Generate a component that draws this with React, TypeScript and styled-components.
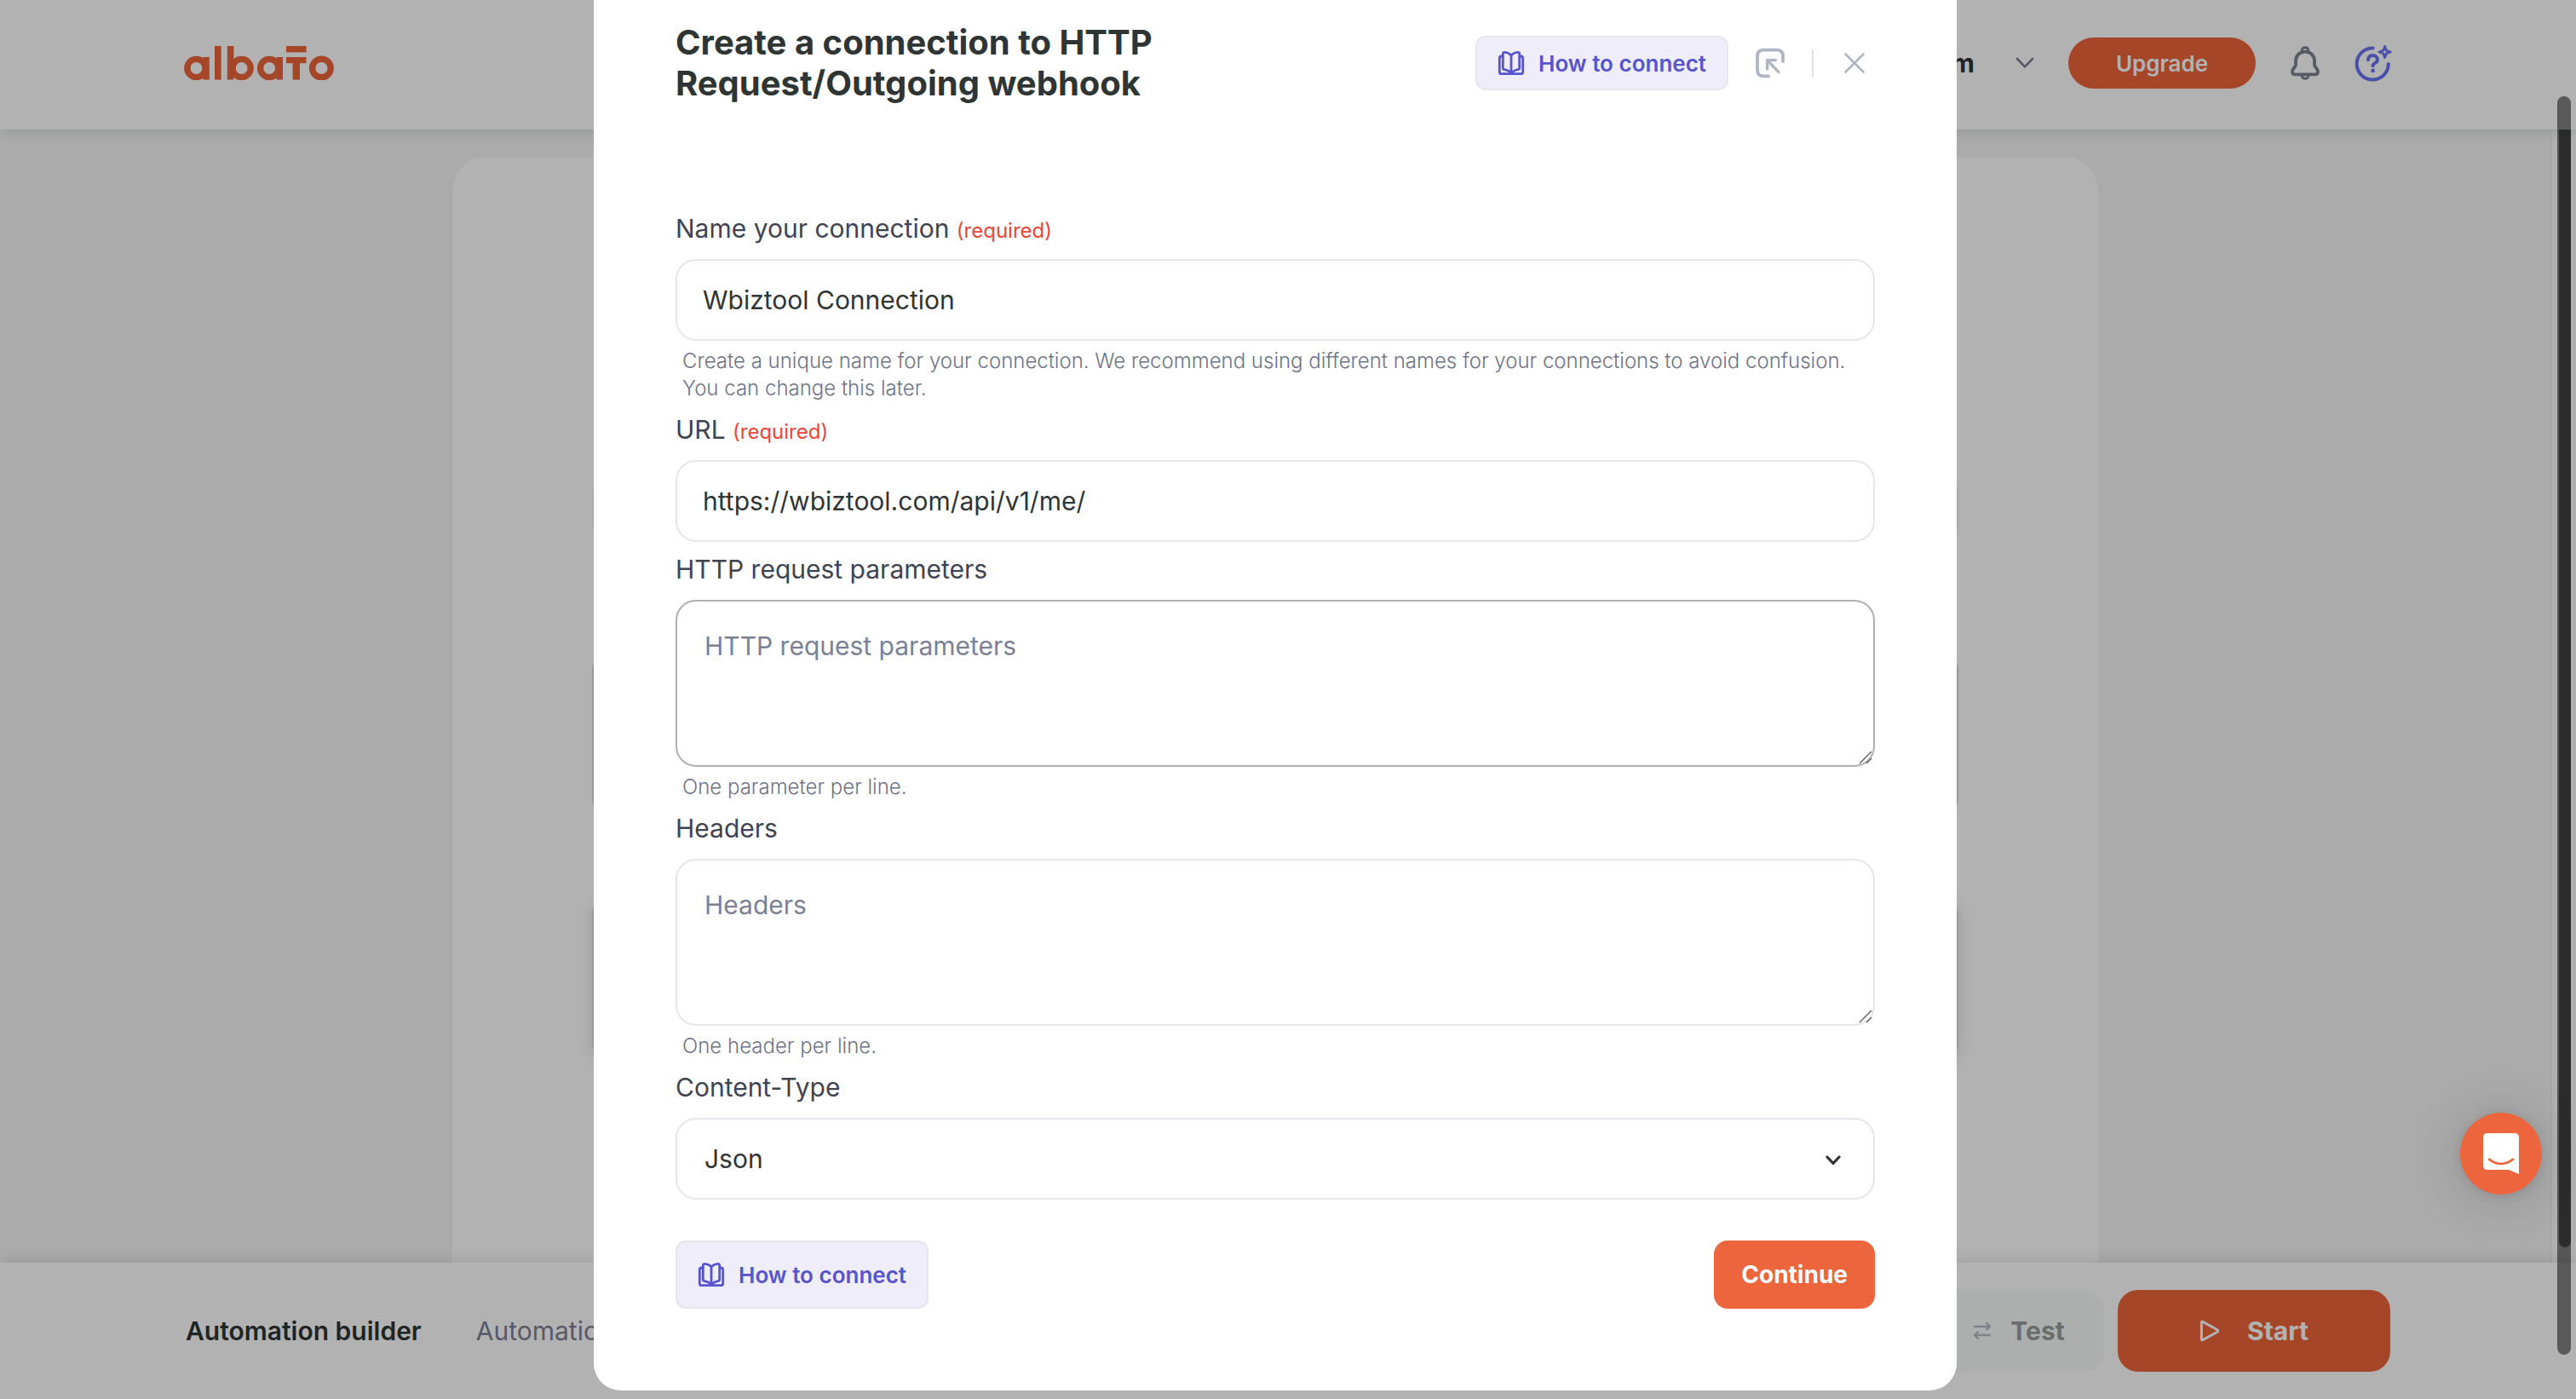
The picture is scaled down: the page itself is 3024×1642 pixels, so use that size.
import React from "react";
import styled, { createGlobalStyle, css } from "styled-components";

const color = {
  ink: "#2f3534",
  label: "#3f4352",
  muted: "#7b8094",
  hint: "#6e7388",
  line: "#e6e6eb",
  accent: "#ed653c",
  violet: "#5853cf",
  violetSoft: "#eeedf9",
  icon: "#b1b5c3",
  danger: "#f04438",
};

const GlobalStyle = createGlobalStyle`
  *, *::before, *::after { box-sizing: border-box; }
  html, body { margin: 0; height: 100%; overflow: hidden; }
  body {
    font-family: Inter, "Liberation Sans", sans-serif;
    color: ${color.ink};
    background: #f5f5f5;
  }
  #root { height: 100%; }
  button, input, textarea, select { font: inherit; color: inherit; margin: 0; }
  button { border: 0; background: none; padding: 0; cursor: pointer; }
  h2, p { margin: 0; }
  svg { display: block; flex: none; }
`;

const Page = styled.div`
  position: relative;
  display: flex;
  flex-direction: column;
  height: 100vh;
  overflow: hidden;
`;

const TopBar = styled.header`
  position: relative;
  z-index: 1;
  flex: none;
  height: 152px;
  padding-bottom: 4px;
  background: #fff;
  box-shadow: 0 2px 16px rgba(60, 80, 90, 0.16);
`;

const BottomBar = styled.footer`
  position: relative;
  z-index: 1;
  flex: none;
  height: 160px;
  background: #fff;
  box-shadow: 0 -2px 16px rgba(60, 80, 70, 0.16);
`;

const Container = styled.div<{ $max: number }>`
  display: flex;
  align-items: center;
  justify-content: space-between;
  width: calc(100% - 400px);
  max-width: ${(p) => p.$max}px;
  height: 100%;
  margin: 0 auto;
`;

const HomeLink = styled.a`
  display: block;
  color: ${color.accent};
`;

const TopActions = styled.div`
  display: flex;
  align-items: center;
  gap: 40px;
`;

const Workspace = styled.button`
  display: flex;
  align-items: center;
  gap: 48px;
  font-size: 30px;
  font-weight: 700;
`;

const Upgrade = styled.button`
  width: 220px;
  height: 60px;
  border-radius: 30px;
  background: ${color.accent};
  color: #fff;
  font-size: 26px;
  font-weight: 600;
`;

const IconButton = styled.button`
  display: grid;
  place-items: center;
`;

const Workarea = styled.main`
  display: flex;
  flex: 1;
  min-height: 0;
`;

const Canvas = styled.div`
  flex: 1;
  padding: 32px 531px 0;
`;

const Sheet = styled.section`
  display: flex;
  flex-direction: column;
  height: 100%;
  padding: 378px 164px 0;
  border-radius: 40px 40px 0 0;
  background: #fff;
`;

const Notice = styled.div`
  height: 70px;
  margin-bottom: 138px;
  border-radius: 16px;
  background: #f4f4f5;
`;

const StepCard = styled.div<{ $raised?: boolean }>`
  height: 184px;
  margin-bottom: 103px;
  border: 2px solid #dadada;
  border-radius: 16px;
  background: #fff;
  box-shadow: ${(p) => (p.$raised ? "0 4px 20px rgba(0, 0, 0, 0.12)" : "none")};
`;

const PageTrack = styled.div`
  flex: none;
  width: 30px;
  padding: 0 6px 18px 8px;
  border-left: 2px solid #f0f0f0;
  background: #fcfcfc;
`;

const PageThumb = styled.div`
  height: 100%;
  border-radius: 0 0 8px 8px;
  background: #7f7f7f;
`;

const Tabs = styled.nav`
  display: flex;
  gap: 64px;
`;

const Tab = styled.a<{ $active?: boolean }>`
  color: ${(p) => (p.$active ? color.ink : color.muted)};
  font-size: 30px;
  font-weight: ${(p) => (p.$active ? 600 : 400)};
  text-decoration: none;
`;

const RunActions = styled.div`
  display: flex;
  gap: 16px;
`;

const RunButton = styled.button<{ $primary?: boolean }>`
  display: flex;
  align-items: center;
  justify-content: center;
  width: ${(p) => (p.$primary ? 320 : 200)}px;
  height: 96px;
  gap: ${(p) => (p.$primary ? 32 : 22)}px;
  border-radius: 24px;
  background: ${(p) => (p.$primary ? color.accent : "#f7fbf9")};
  color: ${(p) => (p.$primary ? "#fff" : "#999d9b")};
  font-size: 30px;
  font-weight: 700;
`;

const Overlay = styled.div`
  position: absolute;
  inset: 0;
  z-index: 2;
  display: flex;
  align-items: flex-end;
  justify-content: center;
  padding: 0 30px 10px 0;
  background: rgba(0, 0, 0, 0.3);
`;

const OverlayThumb = styled.div`
  position: absolute;
  top: 113px;
  right: 6px;
  bottom: 52px;
  width: 16px;
  border-radius: 8px;
  background: rgba(0, 0, 0, 0.5);
`;

const Modal = styled.div`
  flex: none;
  width: 1600px;
  max-width: 100%;
  padding: 96px;
  border-radius: 32px;
  background: #fff;
`;

const ModalHeader = styled.header`
  display: flex;
  align-items: center;
  justify-content: space-between;
  margin-bottom: 126px;
`;

const Title = styled.h2`
  width: 640px;
  font-size: 40px;
  font-weight: 700;
  line-height: 48px;
`;

const HeaderActions = styled.div`
  display: flex;
  align-items: center;
  gap: 32px;
  padding-right: 12px;
`;

const Divider = styled.span`
  width: 2px;
  height: 32px;
  background: #dcdfe6;
`;

const CloseButton = styled(IconButton)`
  margin-left: 4px;
`;

const HelpButton = styled.button<{ $large?: boolean }>`
  display: flex;
  align-items: center;
  height: ${(p) => (p.$large ? 80 : 64)}px;
  gap: 16px;
  padding: 0 24px;
  border: 2px solid ${color.line};
  border-radius: 12px;
  background: ${color.violetSoft};
  color: ${color.violet};
  font-size: 26px;
  font-weight: 600;
`;

const Form = styled.form`
  display: flex;
  flex-direction: column;
  gap: 12px;
`;

const Field = styled.div`
  display: flex;
  flex-direction: column;
`;

const Label = styled.label`
  margin-bottom: 16px;
  color: ${color.label};
  font-size: 30px;
  line-height: 40px;
`;

const Required = styled.span`
  color: ${color.danger};
  font-size: 24px;
  line-height: 24px;
`;

const control = css`
  display: block;
  width: 100%;
  border: 2px solid ${color.line};
  border-radius: 24px;
  outline: 0;
  background: #fff;
  font-size: 30px;
  line-height: 40px;
`;

const TextInput = styled.input`
  ${control}
  height: 96px;
  padding: 0 30px;
`;

const TextArea = styled.textarea<{ $hover?: boolean }>`
  ${control}
  height: 196px;
  padding: 32px;
  border-color: ${(p) => (p.$hover ? "#b0b0b0" : color.line)};
  resize: none;
  &::placeholder { color: ${color.muted}; opacity: 1; }
`;

const Select = styled.select`
  ${control}
  height: 96px;
  padding: 0 32px;
  appearance: none;
`;

const ControlWrap = styled.div`
  position: relative;
`;

const Grip = styled.svg`
  position: absolute;
  right: 2px;
  bottom: 2px;
`;

const Caret = styled.svg`
  position: absolute;
  top: 44px;
  right: 40px;
  pointer-events: none;
`;

const Hint = styled.p`
  margin-top: 8px;
  padding: 0 8px;
  color: ${color.hint};
  font-size: 24px;
  font-weight: 300;
  line-height: 32px;
`;

const FormFooter = styled.div`
  display: flex;
  justify-content: space-between;
  margin-top: 36px;
`;

const Submit = styled.button`
  height: 80px;
  padding: 0 32px;
  border-radius: 16px;
  background: ${color.accent};
  color: #fff;
  font-size: 28px;
  font-weight: 700;
`;

const ChatLauncher = styled.button`
  position: absolute;
  right: 40px;
  bottom: 240px;
  z-index: 3;
  display: grid;
  place-items: center;
  width: 96px;
  height: 96px;
  border-radius: 50%;
  background: ${color.accent};
  box-shadow: 0 2px 12px rgba(0, 0, 0, 0.1), 0 4px 64px rgba(0, 0, 0, 0.16);
`;

const Logo = () => (
  <svg width="176" height="40" viewBox="0 0 176 40" fill="currentColor" aria-hidden="true">
    <g fill="none" stroke="currentColor" strokeWidth="7.4">
      <circle cx="14.4" cy="26" r="10.6" />
      <circle cx="67.6" cy="26" r="10.6" />
      <circle cx="100.2" cy="26" r="10.6" />
      <circle cx="161.4" cy="26" r="10.8" />
    </g>
    <rect x="22.4" y="13" width="7.4" height="26.6" />
    <rect x="36" y="0" width="7.6" height="39.6" />
    <rect x="50.8" y="0" width="7.6" height="39.6" />
    <rect x="108.6" y="13" width="7.4" height="26.6" />
    <rect x="120" y="0" width="23.6" height="7.4" />
    <rect x="120" y="13" width="23.6" height="7.2" />
    <rect x="127.6" y="13" width="8.4" height="26.6" />
  </svg>
);

const BookIcon = () => (
  <svg width="32" height="32" viewBox="0 0 32 32" fill="none" stroke="currentColor" strokeWidth="2.8" strokeLinecap="round" strokeLinejoin="round" aria-hidden="true">
    <path d="M6 8H4.6Q2.3 8 2.3 10.2V26.4Q2.3 28.7 4.6 28.7H27.4Q29.7 28.7 29.7 26.4V10.2Q29.7 8 27.4 8H26" />
    <path d="M16 6.6C13.6 4.6 11 3.6 8.4 3.4Q6.3 3.3 6.3 5.4V21.4Q6.3 23.4 8.3 23.7C11.2 24.2 13.6 25.2 16 27.4" />
    <path d="M16 6.6C18.4 4.6 21 3.6 23.6 3.4Q25.7 3.3 25.7 5.4V21.4Q25.7 23.4 23.7 23.7C20.8 24.2 18.4 25.2 16 27.4" />
    <path d="M16 6.6V27.4" />
  </svg>
);

const CollapseIcon = () => (
  <svg width="34" height="36" viewBox="0 0 34 36" fill="none" stroke={color.icon} strokeWidth="3.8" strokeLinecap="round" strokeLinejoin="round" aria-hidden="true">
    <path d="M15 33.4H9.5Q2 33.4 2 26V9.5Q2 2.6 9.5 2.6H24.5Q32 2.6 32 9.5V16" />
    <path d="M27 28.6L13.6 14.6M13.6 25V14.6H23.4" strokeWidth="3.4" />
  </svg>
);

const CloseIcon = () => (
  <svg width="24" height="24" viewBox="0 0 24 24" fill="none" stroke={color.icon} strokeWidth="2.6" strokeLinecap="round" aria-hidden="true">
    <path d="M1.5 1.5L22.5 22.5M22.5 1.5L1.5 22.5" />
  </svg>
);

const BellIcon = () => (
  <svg width="36" height="40" viewBox="0 0 36 40" fill="none" stroke="#7b8190" strokeWidth="3.8" strokeLinejoin="round" aria-hidden="true">
    <path d="M18 6.6C11.2 6.6 7 11.6 7 17.6V22.4C7 24.4 3 26.8 3 30Q3 33.4 6.4 33.4H29.6Q33 33.4 33 30C33 26.8 29 24.4 29 22.4V17.6C29 11.6 24.8 6.6 18 6.6Z" />
    <path d="M14.2 7.4V5.6Q14.2 1.8 18 1.8T21.8 5.6V7.4M13.8 33.6Q14.2 38.2 18 38.2T22.2 33.6" strokeWidth="3" />
  </svg>
);

const AssistIcon = () => (
  <svg width="44" height="44" viewBox="0 0 44 44" fill="none" stroke="#6a72f0" strokeWidth="4" strokeLinecap="round" strokeLinejoin="round" aria-hidden="true">
    <path d="M21.6 4.4A18.6 18.6 0 1 0 39.8 23" />
    <path d="M16 18.2C16 14.8 18.4 13 21.4 13S27 15.2 27 18.2C27 22 21.6 21.8 21.6 25.2" />
    <path d="M21.6 30.8V31" strokeWidth="4.6" />
    <path d="M35.6 2.4L37.4 7.2L42.2 9L37.4 10.8L35.6 15.6L33.8 10.8L29 9L33.8 7.2Z" strokeWidth="2.8" />
  </svg>
);

const ChatIcon = () => (
  <svg width="42" height="48" viewBox="0 0 42 48" aria-hidden="true">
    <path d="M5 0H37Q42 0 42 5V48L30 43H5Q0 43 0 38V5Q0 0 5 0Z" fill="#fff" />
    <path d="M7 30.6Q21 41.4 35 30.6" fill="none" stroke={color.accent} strokeWidth="2.6" strokeLinecap="round" />
  </svg>
);

const ResizeGrip = () => (
  <Grip width="18" height="18" viewBox="0 0 18 18" stroke="#5c5c5c" strokeWidth="1.4" aria-hidden="true">
    <path d="M2 16L16 2M10 16L16 10" />
  </Grip>
);

const HowTo = ({ large }: { large?: boolean }) => (
  <HelpButton type="button" $large={large}>
    <BookIcon />
    How to connect
  </HelpButton>
);

export default function App() {
  return (
    <Page>
      <GlobalStyle />
      <TopBar>
        <Container $max={2592}>
          <HomeLink href="#" aria-label="albato">
            <Logo />
          </HomeLink>
          <TopActions>
            <Workspace type="button">
              m
              <svg width="22" height="14" viewBox="0 0 22 14" fill="none" stroke="#7b8190" strokeWidth="2.6" strokeLinecap="round" strokeLinejoin="round" aria-hidden="true">
                <path d="M2 2L11 11.4L20 2" />
              </svg>
            </Workspace>
            <Upgrade type="button">Upgrade</Upgrade>
            <IconButton type="button" aria-label="Notifications"><BellIcon /></IconButton>
            <IconButton type="button" aria-label="Help"><AssistIcon /></IconButton>
          </TopActions>
        </Container>
      </TopBar>

      <Workarea>
        <Canvas>
          <Sheet>
            <Notice />
            <StepCard />
            <StepCard $raised />
          </Sheet>
        </Canvas>
        <PageTrack>
          <PageThumb />
        </PageTrack>
      </Workarea>

      <BottomBar>
        <Container $max={2588}>
          <Tabs>
            <Tab href="#" $active>Automation builder</Tab>
            <Tab href="#">Automation</Tab>
          </Tabs>
          <RunActions>
            <RunButton type="button">
              <svg width="22" height="22" viewBox="0 0 22 22" fill="none" stroke="#b9bac2" strokeWidth="2.4" strokeLinecap="round" strokeLinejoin="round" aria-hidden="true">
                <path d="M2 6H20M16 2L20 6L16 9.6M20 16H2M6 12.4L2 16L6 20" />
              </svg>
              Test
            </RunButton>
            <RunButton type="button" $primary>
              <svg width="24" height="26" viewBox="0 0 24 26" fill="none" stroke="currentColor" strokeWidth="3" strokeLinejoin="round" aria-hidden="true">
                <path d="M2.4 3.2V22.8Q2.4 24.4 4 23.6L21 14.2Q22.4 13 21 11.8L4 2.4Q2.4 1.6 2.4 3.2Z" />
              </svg>
              Start
            </RunButton>
          </RunActions>
        </Container>
      </BottomBar>

      <Overlay>
        <Modal role="dialog" aria-modal="true" aria-labelledby="dialog-title">
          <ModalHeader>
            <Title id="dialog-title">Create a connection to HTTP Request/Outgoing webhook</Title>
            <HeaderActions>
              <HowTo />
              <IconButton type="button" aria-label="Collapse"><CollapseIcon /></IconButton>
              <Divider />
              <CloseButton type="button" aria-label="Close"><CloseIcon /></CloseButton>
            </HeaderActions>
          </ModalHeader>

          <Form onSubmit={(e) => e.preventDefault()}>
            <Field>
              <Label htmlFor="name">Name your connection <Required>(required)</Required></Label>
              <TextInput id="name" type="text" defaultValue="Wbiztool Connection" />
              <Hint>
                Create a unique name for your connection. We recommend using different names for your
                connections to avoid confusion. You can change this later.
              </Hint>
            </Field>
            <Field>
              <Label htmlFor="url">URL <Required>(required)</Required></Label>
              <TextInput id="url" type="text" defaultValue="https://wbiztool.com/api/v1/me/" />
            </Field>
            <Field>
              <Label htmlFor="params">HTTP request parameters</Label>
              <ControlWrap>
                <TextArea id="params" placeholder="HTTP request parameters" $hover />
                <ResizeGrip />
              </ControlWrap>
              <Hint>One parameter per line.</Hint>
            </Field>
            <Field>
              <Label htmlFor="headers">Headers</Label>
              <ControlWrap>
                <TextArea id="headers" placeholder="Headers" />
                <ResizeGrip />
              </ControlWrap>
              <Hint>One header per line.</Hint>
            </Field>
            <Field>
              <Label htmlFor="type">Content-Type</Label>
              <ControlWrap>
                <Select id="type" defaultValue="json">
                  <option value="json">Json</option>
                </Select>
                <Caret width="18" height="12" viewBox="0 0 18 12" fill="none" stroke={color.ink} strokeWidth="3.2" strokeLinecap="round" strokeLinejoin="round" aria-hidden="true">
                  <path d="M2 2L9 9.4L16 2" />
                </Caret>
              </ControlWrap>
            </Field>
            <FormFooter>
              <HowTo large />
              <Submit type="submit">Continue</Submit>
            </FormFooter>
          </Form>
        </Modal>
        <OverlayThumb />
      </Overlay>

      <ChatLauncher type="button" aria-label="Open chat">
        <ChatIcon />
      </ChatLauncher>
    </Page>
  );
}
